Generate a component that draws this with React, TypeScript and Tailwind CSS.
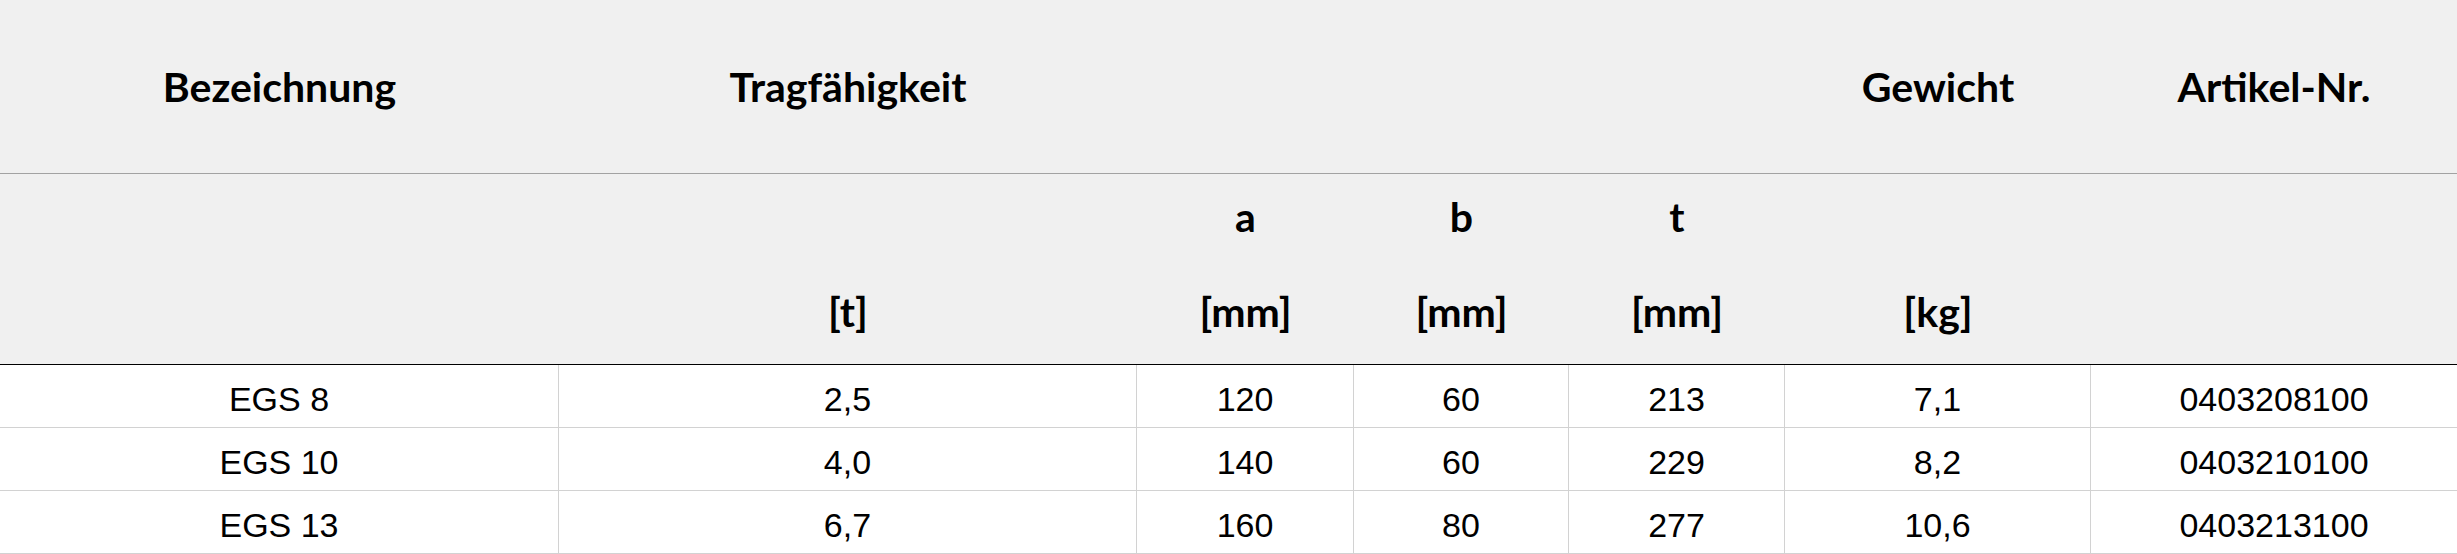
import React from "react";

const cols = "grid grid-cols-[559px_578px_217px_215px_216px_306px_366px]";

const rows = [
  ["EGS 8", "2,5", "120", "60", "213", "7,1", "0403208100"],
  ["EGS 10", "4,0", "140", "60", "229", "8,2", "0403210100"],
  ["EGS 13", "6,7", "160", "80", "277", "10,6", "0403213100"],
];

const head1 = ["Bezeichnung", "Tragfähigkeit", "", "", "", "Gewicht", "Artikel-Nr."];
const head2: [string, string][] = [
  ["", ""],
  ["", "[t]"],
  ["a", "[mm]"],
  ["b", "[mm]"],
  ["t", "[mm]"],
  ["", "[kg]"],
  ["", ""],
];

export default function App() {
  return (
    <div className="w-[2457px] h-[554px] bg-white overflow-hidden text-black">
      <div className="bg-[#f0f0f0] font-['Lato',sans-serif] font-bold text-[41px]">
        <div className={`${cols} h-[174px] border-b border-[#a2a2a2]`}>
          {head1.map((h, i) => (
            <div key={i} className="flex items-center justify-center leading-[48px]">
              {h}
            </div>
          ))}
        </div>
        <div className={`${cols} h-[191px] border-b border-black`}>
          {head2.map(([a, b], i) => (
            <div key={i} className="flex flex-col items-center pt-[19px] gap-[47px] leading-[48px]">
              <div className="h-[48px]">{a}</div>
              <div className="h-[48px]">{b}</div>
            </div>
          ))}
        </div>
      </div>
      <div className="font-['Liberation_Sans',Arial,sans-serif] text-[34px]">
        {rows.map((r, ri) => (
          <div key={ri} className={`${cols} h-[63px] border-b border-[#d2d2d2]`}>
            {r.map((c, ci) => (
              <div
                key={ci}
                className={`flex items-center justify-center pt-[6px] leading-none ${ci < 6 ? "border-r border-[#d2d2d2]" : ""}`}
              >
                {c}
              </div>
            ))}
          </div>
        ))}
      </div>
    </div>
  );
}
